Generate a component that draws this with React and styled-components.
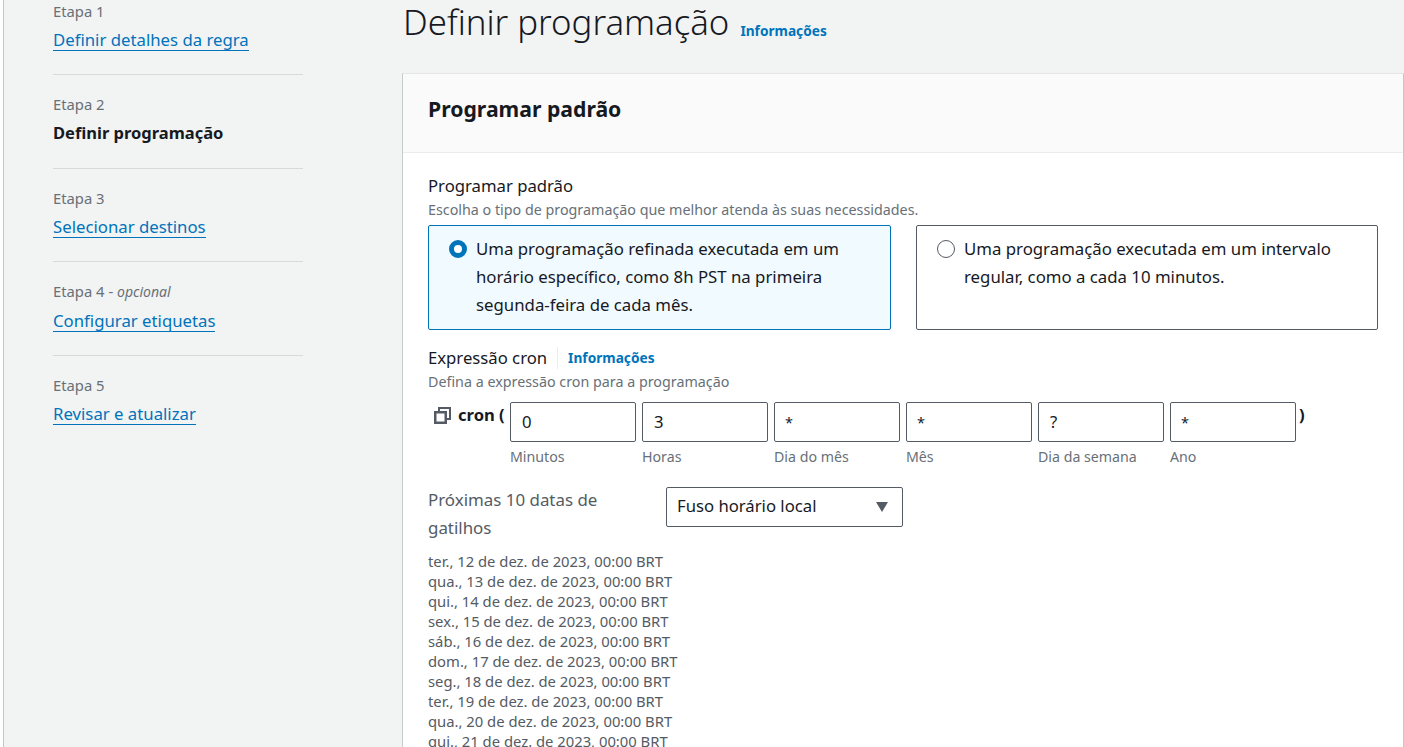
import React from 'react'
import styled, { createGlobalStyle } from 'styled-components'

const GlobalStyle = createGlobalStyle`
  html, body {
    margin: 0;
    height: 747px;
    overflow: hidden;
    background: #ffffff;
  }
  body {
    font-family: "Noto Sans", "Open Sans", sans-serif;
    color: #16191f;
  }
`

const Page = styled.div`
  display: grid;
  grid-template-columns: 399px 1001px;
  width: 1401px;
  height: 747px;
  margin-left: 3px;
  box-sizing: border-box;
  border-left: 1px solid #c4c7c7;
  background: #f2f3f3;
  overflow: hidden;
`

const Sidebar = styled.nav`
  padding: 0 0 0 49px;
`

const Step = styled.div`
  width: 250px;
  height: 93.5px;
  box-sizing: border-box;
  padding-top: ${p => (p.$first ? '1px' : '19px')};
  border-bottom: ${p => (p.$last ? 'none' : '1px solid #d5dbdb')};
  ${p => p.$first && 'height: 75px;'}
`

const StepLabel = styled.div`
  font-size: 14.8px;
  line-height: 20px;
  color: #687078;

  em {
    font-style: italic;
    font-size: 14px;
  }
`

const StepLink = styled.a`
  display: inline-block;
  margin-top: 8px;
  font-size: 16.75px;
  line-height: 21px;
  color: #0073bb;
  border-bottom: 1px solid #0073bb;
`

const StepCurrent = styled.div`
  margin-top: 8px;
  font-size: 16.5px;
  line-height: 22px;
  font-weight: 700;
`

const Main = styled.main`
  min-width: 0;
`

const TitleRow = styled.header`
  display: flex;
  align-items: flex-start;
  gap: 11px;
  height: 73px;
  box-sizing: border-box;
`

const Title = styled.h1`
  margin: 0;
  font-size: 34.75px;
  line-height: 44px;
  font-weight: 300;
`

const InfoLink = styled.a`
  font-size: 13.7px;
  font-weight: 700;
  color: #0073bb;
`

const TitleInfo = styled(InfoLink)`
  margin-top: 21px;
`

const Panel = styled.section`
  margin-left: -1px;
  background: #ffffff;
  border-top: 1px solid #e4e6e6;
  border-left: 1px solid #c9cccc;
  border-right: 1px solid #c4c7c7;
  height: 700px;
`

const PanelHeader = styled.div`
  height: 79px;
  box-sizing: border-box;
  padding: 19px 25px 0;
  background: #fafafa;
  border-bottom: 1px solid #eaeded;
  font-size: 21.2px;
  line-height: 32px;
  font-weight: 700;
`

const PanelBody = styled.div`
  padding: 22px 25px 0;
`

const FieldLabel = styled.div`
  display: flex;
  align-items: center;
  font-size: 16.7px;
  line-height: 22px;
`

const Hint = styled.div`
  margin-top: 3px;
  font-size: 14.3px;
  line-height: 20px;
  color: #687078;
`

const Cards = styled.div`
  display: grid;
  grid-template-columns: 463px 462px;
  gap: 25px;
  margin-top: 5px;
`

const Card = styled.div`
  display: flex;
  gap: 9px;
  height: 105px;
  box-sizing: border-box;
  padding: 9px 20px 0;
  border: 1px solid ${p => (p.$selected ? '#0073bb' : '#545b64')};
  border-radius: 2px;
  background: ${p => (p.$selected ? '#f1faff' : '#ffffff')};
  font-size: 16.8px;
  line-height: 28px;
`

const Radio = styled.span`
  flex: none;
  width: 18px;
  height: 18px;
  margin-top: 5px;
  box-sizing: border-box;
  border-radius: 50%;
  border: ${p => (p.$checked ? '5px solid #0073bb' : '1.5px solid #545b64')};
  background: #ffffff;
`

const CronLabel = styled(FieldLabel)`
  margin-top: 17px;
`

const Divider = styled.span`
  align-self: stretch;
  margin: 0 10px;
  border-left: 1px solid #eaeded;
`

const CronRow = styled.div`
  display: flex;
  align-items: flex-start;
  margin-top: 10px;
`

const CronPrefix = styled.div`
  display: flex;
  align-items: center;
  gap: 7px;
  width: 82px;
  box-sizing: border-box;
  padding-left: 6px;
  height: 24px;
  font-size: 16.6px;
  font-weight: 700;
  white-space: nowrap;

  svg {
    margin-top: 3px;
  }
`

const CronFields = styled.div`
  display: flex;
  gap: 6px;
`

const CronField = styled.div`
  width: 126px;
`

const Input = styled.div`
  height: 40px;
  box-sizing: border-box;
  padding: 0 ${p => (p.$symbol ? '10px' : '11px')};
  border: 1px solid #545b64;
  border-radius: 2px;
  font-size: ${p => (p.$symbol ? '14.5px' : '16.7px')};
  line-height: 38px;
`

const FieldHint = styled.div`
  margin-top: 5px;
  font-size: 14.2px;
  line-height: 20px;
  color: #687078;
`

const CronClose = styled.div`
  margin-left: 3px;
  font-size: 16.6px;
  line-height: 26px;
  font-weight: 700;
`

const TriggerRow = styled.div`
  display: flex;
  align-items: flex-start;
  margin-top: 20px;
`

const TriggerLabel = styled.div`
  width: 238px;
  margin-top: -1px;
  padding-right: 48px;
  box-sizing: border-box;
  font-size: 16.9px;
  line-height: 28px;
  color: #545b64;
`

const Select = styled.div`
  display: flex;
  align-items: center;
  justify-content: space-between;
  width: 237px;
  height: 40px;
  box-sizing: border-box;
  padding: 0 14px 3px 10px;
  border: 1px solid #545b64;
  border-radius: 2px;
  font-size: 16.7px;
`

const Caret = styled.span`
  width: 0;
  height: 0;
  margin-top: 3px;
  border-left: 6.5px solid transparent;
  border-right: 6.5px solid transparent;
  border-top: 10px solid #545b64;
`

const Dates = styled.ul`
  margin: 9px 0 0;
  padding: 0;
  list-style: none;
`

const DateItem = styled.li`
  font-size: 14.8px;
  line-height: 20px;
  color: #545b64;
  white-space: nowrap;
`

const steps = [
  { label: 'Etapa 1', link: 'Definir detalhes da regra' },
  { label: 'Etapa 2', current: 'Definir programação' },
  { label: 'Etapa 3', link: 'Selecionar destinos' },
  { label: 'Etapa 4', optional: true, link: 'Configurar etiquetas' },
  { label: 'Etapa 5', link: 'Revisar e atualizar' }
]

const cronFields = [
  { value: '0', hint: 'Minutos' },
  { value: '3', hint: 'Horas' },
  { value: '*', hint: 'Dia do mês' },
  { value: '*', hint: 'Mês' },
  { value: '?', hint: 'Dia da semana' },
  { value: '*', hint: 'Ano' }
]

const dates = [
  'ter., 12 de dez. de 2023, 00:00 BRT',
  'qua., 13 de dez. de 2023, 00:00 BRT',
  'qui., 14 de dez. de 2023, 00:00 BRT',
  'sex., 15 de dez. de 2023, 00:00 BRT',
  'sáb., 16 de dez. de 2023, 00:00 BRT',
  'dom., 17 de dez. de 2023, 00:00 BRT',
  'seg., 18 de dez. de 2023, 00:00 BRT',
  'ter., 19 de dez. de 2023, 00:00 BRT',
  'qua., 20 de dez. de 2023, 00:00 BRT',
  'qui., 21 de dez. de 2023, 00:00 BRT'
]

const CopyIcon = () => (
  <svg width="17" height="17" viewBox="0 0 17 17" fill="none" stroke="#545b64">
    <rect x="1.25" y="5.25" width="10.5" height="10.5" strokeWidth="2.5" />
    <path d="M5 4V1h11v11h-3" strokeWidth="2" />
  </svg>
)

const App = () => (
  <Page>
    <GlobalStyle />
    <Sidebar>
      {steps.map((step, i) => (
        <Step key={step.label} $first={i === 0} $last={i === steps.length - 1}>
          <StepLabel>
            {step.label}
            {step.optional && (
              <>
                {' - '}
                <em>opcional</em>
              </>
            )}
          </StepLabel>
          {step.link ? <StepLink>{step.link}</StepLink> : <StepCurrent>{step.current}</StepCurrent>}
        </Step>
      ))}
    </Sidebar>
    <Main>
      <TitleRow>
        <Title>Definir programação</Title>
        <TitleInfo>Informações</TitleInfo>
      </TitleRow>
      <Panel>
        <PanelHeader>Programar padrão</PanelHeader>
        <PanelBody>
          <FieldLabel>Programar padrão</FieldLabel>
          <Hint>Escolha o tipo de programação que melhor atenda às suas necessidades.</Hint>
          <Cards>
            <Card $selected>
              <Radio $checked />
              <span>Uma programação refinada executada em um horário específico, como 8h PST na primeira segunda-feira de cada mês.</span>
            </Card>
            <Card>
              <Radio />
              <span>Uma programação executada em um intervalo regular, como a cada 10 minutos.</span>
            </Card>
          </Cards>
          <CronLabel>
            Expressão cron
            <Divider />
            <InfoLink>Informações</InfoLink>
          </CronLabel>
          <Hint>Defina a expressão cron para a programação</Hint>
          <CronRow>
            <CronPrefix>
              <CopyIcon />
              cron (
            </CronPrefix>
            <CronFields>
              {cronFields.map(field => (
                <CronField key={field.hint}>
                  <Input $symbol={field.value === '*'}>{field.value}</Input>
                  <FieldHint>{field.hint}</FieldHint>
                </CronField>
              ))}
            </CronFields>
            <CronClose>)</CronClose>
          </CronRow>
          <TriggerRow>
            <TriggerLabel>Próximas 10 datas de gatilhos</TriggerLabel>
            <Select>
              Fuso horário local
              <Caret />
            </Select>
          </TriggerRow>
          <Dates>
            {dates.map(date => (
              <DateItem key={date}>{date}</DateItem>
            ))}
          </Dates>
        </PanelBody>
      </Panel>
    </Main>
  </Page>
)

export default App
